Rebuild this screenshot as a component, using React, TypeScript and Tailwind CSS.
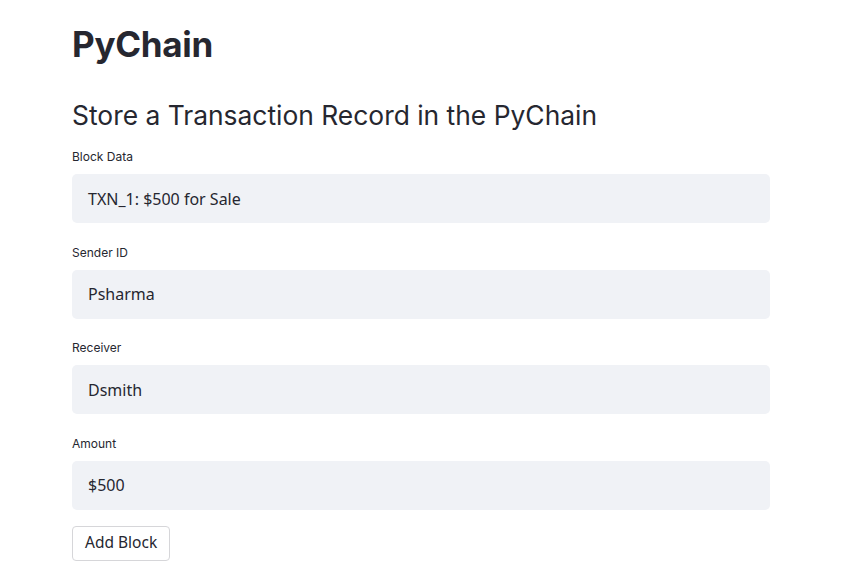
const fields = [
  { label: "Block Data", value: "TXN_1: $500 for Sale" },
  { label: "Sender ID", value: "Psharma" },
  { label: "Receiver", value: "Dsmith" },
  { label: "Amount", value: "$500" },
];

export default function App() {
  return (
    <div className="min-h-screen bg-white text-[#262730] font-['Noto_Sans',sans-serif]">
      <div className="w-[698px] ml-[72px] pt-[20px]">
        <h1 className="text-[35px] leading-[48px] font-bold font-['Inter',sans-serif] tracking-[-0.3px]">
          PyChain
        </h1>
        <h2 className="mt-[29px] text-[26.4px] leading-[36px] font-['Inter',sans-serif] font-normal">
          Store a Transaction Record in the PyChain
        </h2>
        <div className="mt-[15px] flex flex-col">
          {fields.map((f, i) => (
            <div key={f.label} className={i > 0 ? "mt-[20.5px]" : ""}>
              <label className="block text-[12px] leading-[18px] font-['Inter',sans-serif] mb-[8px]">
                {f.label}
              </label>
              <div className="h-[49px] rounded-[5px] bg-[#f0f2f6] px-[16px] flex items-center text-[16px]">
                {f.value}
              </div>
            </div>
          ))}
        </div>
        <button className="mt-[16px] h-[35px] px-[12px] rounded-[4px] border border-[#d6d6d9] bg-white text-[15.5px] font-['Noto_Sans',sans-serif]">
          Add Block
        </button>
      </div>
    </div>
  );
}
